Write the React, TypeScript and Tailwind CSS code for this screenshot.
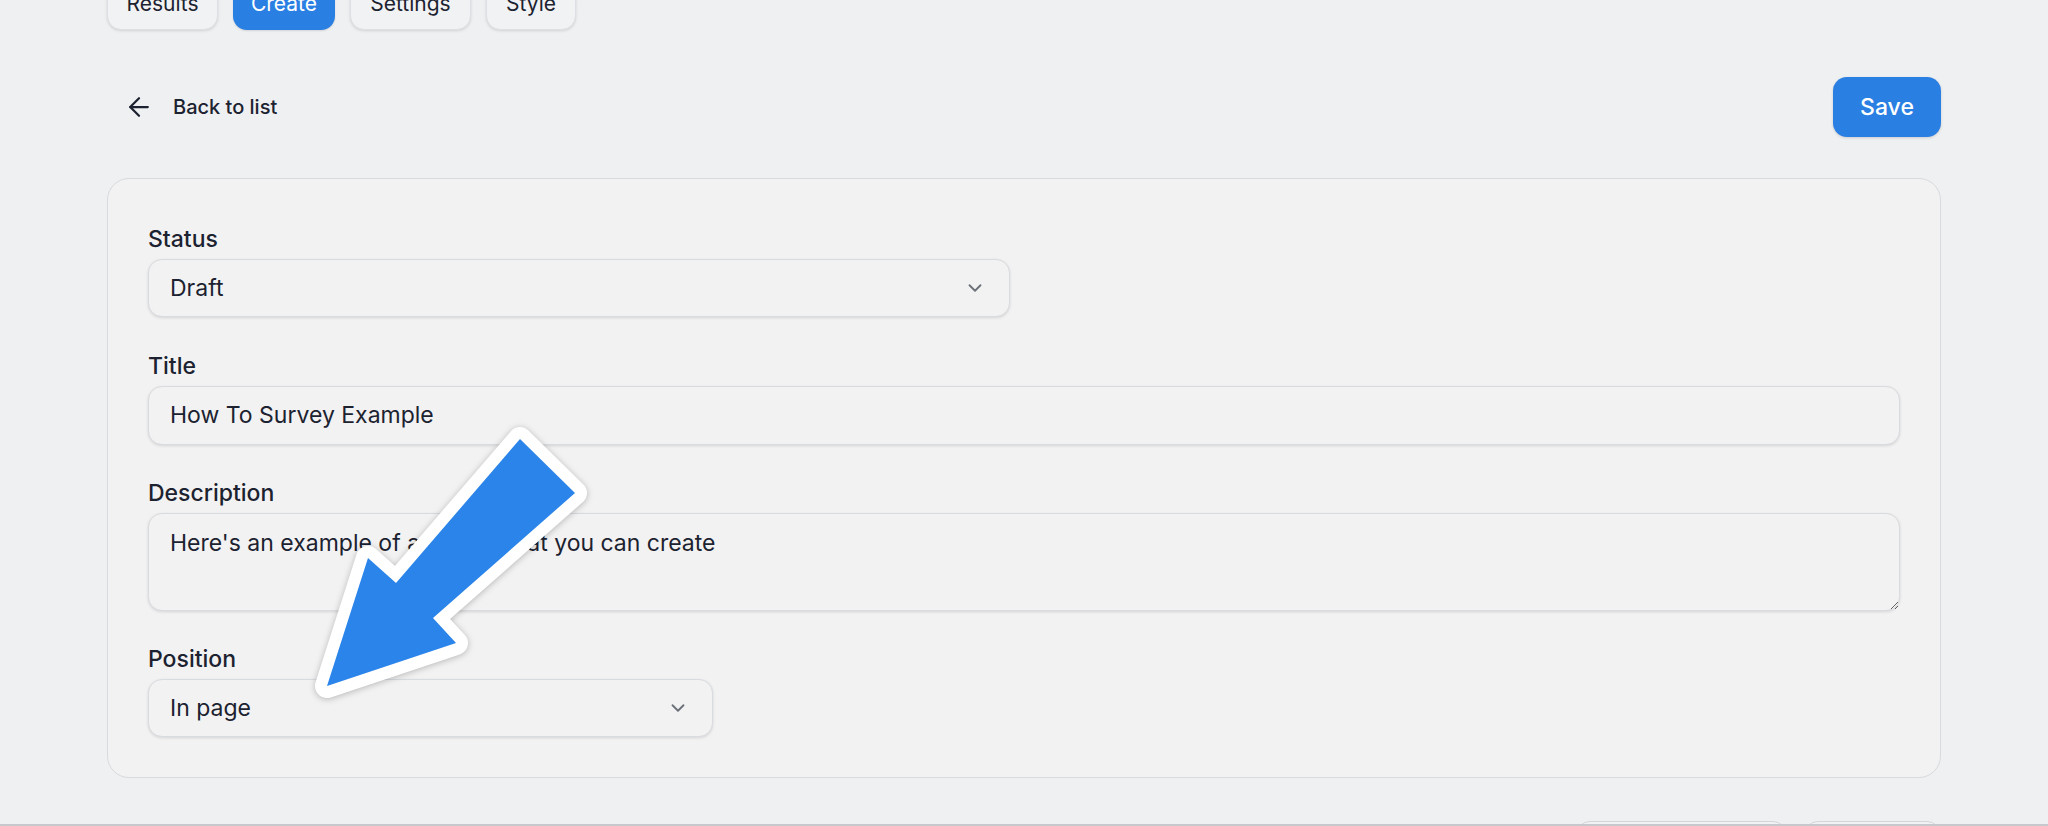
import React from "react";
import { ArrowLeft, ChevronDown } from "lucide-react";

const font = { fontFamily: "Inter, 'Noto Sans', 'Liberation Sans', sans-serif" };

function Tab({ label, active, w }: { label: string; active?: boolean; w: string }) {
  return (
    <div
      className={
        "h-[52px] rounded-[14px] flex items-center justify-center text-[21px] leading-[28px] " +
        w +
        " " +
        (active
          ? "bg-[#2a7fe3] text-white shadow-[0_1px_2px_rgba(0,0,0,0.12)]"
          : "bg-[#f1f2f3] text-[#1c2230] border border-[#dcdfe3] shadow-[0_1px_3px_rgba(0,0,0,0.12)]")
      }
    >
      {label}
    </div>
  );
}

function Label({ children }: { children: React.ReactNode }) {
  return <div className="text-[23px] leading-[28px] font-medium text-[#1c2230] mb-[6px]">{children}</div>;
}

function Select({ value, w }: { value: string; w: string }) {
  return (
    <div
      className={
        "h-[58px] rounded-[14px] border-[1.5px] border-[#d8dbe0] bg-[#f2f2f2] shadow-[0_1px_3px_rgba(0,0,0,0.12)] flex items-center justify-between pl-[21px] pr-[23px] " +
        w
      }
    >
      <span className="text-[23px] text-[#1c2230]">{value}</span>
      <ChevronDown size={22} strokeWidth={2} className="text-[#6b7078]" />
    </div>
  );
}

export default function App() {
  return (
    <div
      className="relative h-[826px] w-[2048px] overflow-hidden bg-[#eff0f2] border-b-2 border-[#c6c8cb]"
      style={font}
    >
      <div className="px-[107px]">
        <div className="-mt-[22px] flex gap-[15px]">
          <Tab label="Results" w="w-[111px]" />
          <Tab label="Create" w="w-[102px]" active />
          <Tab label="Settings" w="w-[121px]" />
          <Tab label="Style" w="w-[90px]" />
        </div>

        <div className="mt-[47px] h-[60px] flex items-center justify-between">
          <div className="flex items-center pl-[17px] gap-[19px] text-[#1c2230]">
            <ArrowLeft size={30} strokeWidth={1.8} />
            <span className="text-[20px] font-medium">Back to list</span>
          </div>
          <div className="h-[60px] w-[108px] rounded-[14px] bg-[#2a7fe3] text-white text-[23px] font-medium flex items-center justify-center shadow-[0_1px_3px_rgba(0,0,0,0.15)]">
            Save
          </div>
        </div>

        <div className="mt-[41px] rounded-[22px] border-[1.5px] border-[#d7dade] bg-[#f2f2f2] px-[40px] pt-[46px] pb-[40px]">
          <Label>Status</Label>
          <Select value="Draft" w="w-[862px]" />

          <div className="mt-[35px]">
            <Label>Title</Label>
            <div className="h-[59px] rounded-[14px] border-[1.5px] border-[#d8dbe0] bg-[#f2f2f2] shadow-[0_1px_3px_rgba(0,0,0,0.12)] flex items-center px-[21px] text-[23px] text-[#1c2230]">
              How To Survey Example
            </div>
          </div>

          <div className="mt-[34px]">
            <Label>Description</Label>
            <textarea
              readOnly
              className="block w-full h-[98px] rounded-[14px] border-[1.5px] border-[#d8dbe0] bg-[#f2f2f2] shadow-[0_1px_3px_rgba(0,0,0,0.12)] px-[21px] pt-[15px] text-[23px] leading-[28px] text-[#1c2230] outline-none resize-y"
              defaultValue="Here's an example of a survey that you can create"
            />
          </div>

          <div className="mt-[34px]">
            <Label>Position</Label>
            <Select value="In page" w="w-[565px]" />
          </div>
        </div>

        <div className="mt-[43px] flex justify-end gap-[17px]">
          <div className="h-[58px] w-[211px] rounded-[14px] border-[1.5px] border-[#d3d6db] bg-[#f1f2f3]" />
          <div className="h-[58px] w-[137px] rounded-[14px] border-[1.5px] border-[#d3d6db] bg-[#f1f2f3]" />
        </div>
      </div>

      <svg
        className="absolute left-0 top-0 pointer-events-none"
        width="2048"
        height="826"
        viewBox="0 0 2048 826"
        style={{ filter: "drop-shadow(0 1px 3px rgba(0,0,0,0.25))" }}
      >
        <polygon
          points="520,439 575,493 433,618 456,643 327,686 368,558 396,583"
          fill="#2a84ea"
          stroke="#ffffff"
          strokeWidth={24}
          strokeLinejoin="round"
          paintOrder="stroke"
        />
      </svg>
    </div>
  );
}
